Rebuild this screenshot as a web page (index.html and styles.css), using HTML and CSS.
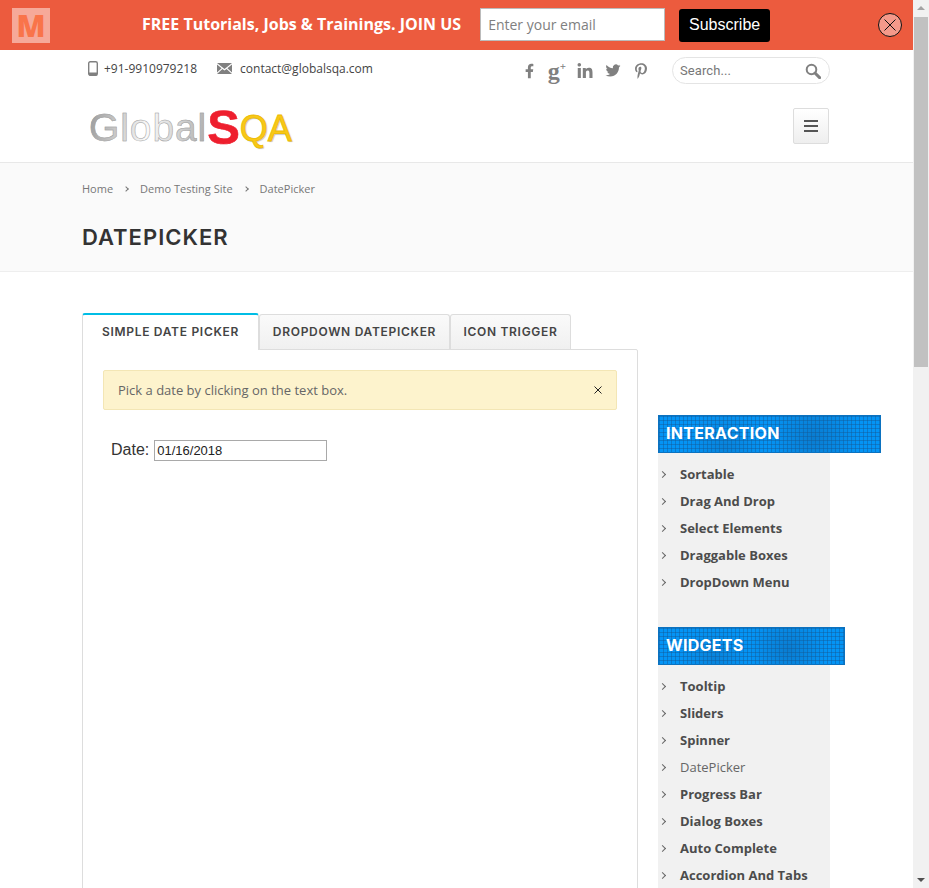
FILE: index.html
```html
<!DOCTYPE html>
<html lang="en">
<head>
  <meta charset="UTF-8">
  <meta name="viewport" content="width=device-width, initial-scale=1.0">
  <title>DatePicker</title>
  <link rel="stylesheet" href="styles.css">
</head>
<body>
  <div class="window">
    <div class="page">
      <div class="promo">
        <div class="promo-logo"><span>M</span></div>
        <div class="promo-text">FREE Tutorials, Jobs &amp; Trainings. JOIN US</div>
        <input class="promo-email" type="text" placeholder="Enter your email">
        <button class="promo-btn" type="button">Subscribe</button>
        <div class="promo-close">
          <svg width="24" height="24" viewBox="0 0 24 24">
            <circle cx="12" cy="12" r="11.5" fill="#f4998a" stroke="#111"/>
            <path d="M6.5 6.5l11 11M17.5 6.5l-11 11" stroke="#111" fill="none"/>
          </svg>
        </div>
      </div>

      <header class="header">
        <div class="topline">
          <div class="contact">
            <svg class="ico-phone" width="10" height="15" viewBox="0 0 10 15">
              <rect x="0.7" y="0.7" width="8.6" height="13.6" rx="1.5" fill="none" stroke="#808080" stroke-width="1.4"/>
              <rect x="1" y="11.5" width="8" height="3" fill="#808080"/>
            </svg>
            <span class="phone">+91-9910979218</span>
            <svg class="ico-mail" width="15" height="11" viewBox="0 0 15 11">
              <path d="M0 0h15L7.5 6z M0 1.6v8l4.6-4.3z M15 1.6v8l-4.6-4.3z M0 11h15L9.6 6 7.5 7.6 5.4 6z" fill="#808080"/>
            </svg>
            <span>contact@globalsqa.com</span>
          </div>
          <div class="social">
            <div class="social-item"><svg width="9" height="16" viewBox="0 0 320 512"><path d="M279.14 288l14.22-92.66h-88.91v-60.13c0-25.35 12.42-50.06 52.24-50.06h40.42V6.26S260.43 0 225.36 0c-73.22 0-121.08 44.38-121.08 124.72v70.62H22.89V288h81.39v224h100.17V288z"/></svg></div>
            <div class="social-item"><span class="gplus">g<sup>+</sup></span></div>
            <div class="social-item"><svg width="16" height="15" viewBox="0 0 448 448"><path d="M100.28 448H7.4V148.9h92.88zM53.79 108.1C24.09 108.1 0 83.5 0 53.8a53.79 53.79 0 0 1 107.58 0c0 29.7-24.1 54.3-53.79 54.3zM447.9 448h-92.68V302.4c0-34.7-.7-79.2-48.29-79.2-48.29 0-55.69 37.7-55.69 76.7V448h-92.78V148.9h89.08v40.8h1.3c12.4-23.5 42.69-48.3 87.88-48.3 94 0 111.28 61.9 111.28 142.3V448z"/></svg></div>
            <div class="social-item"><svg width="16" height="15" viewBox="0 0 24 24"><path d="M23.953 4.57a10 10 0 01-2.825.775 4.958 4.958 0 002.163-2.723c-.951.555-2.005.959-3.127 1.184a4.92 4.92 0 00-8.384 4.482C7.69 8.095 4.067 6.13 1.64 3.162a4.822 4.822 0 00-.666 2.475c0 1.71.87 3.213 2.188 4.096a4.904 4.904 0 01-2.228-.616v.06a4.923 4.923 0 003.946 4.827 4.996 4.996 0 01-2.212.085 4.936 4.936 0 004.604 3.417 9.867 9.867 0 01-6.102 2.105c-.39 0-.779-.023-1.17-.067a13.995 13.995 0 007.557 2.209c9.053 0 13.998-7.496 13.998-13.985 0-.21 0-.42-.015-.63A9.935 9.935 0 0024 4.59z"/></svg></div>
            <div class="social-item"><svg width="12" height="16" viewBox="0 0 384 512"><path d="M204 6.5C101.4 6.5 0 74.9 0 185.6 0 256 39.6 296 63.6 296c9.9 0 15.6-27.6 15.6-35.4 0-9.3-23.7-29.1-23.7-67.8 0-80.4 61.2-137.4 140.4-137.4 68.1 0 118.5 38.7 118.5 109.8 0 53.1-21.3 152.7-90.3 152.7-24.9 0-46.2-18-46.2-43.8 0-37.8 26.4-74.4 26.4-113.4 0-66.2-93.9-54.2-93.9 25.8 0 16.8 2.1 35.4 9.6 50.7-13.8 59.4-42 147.9-42 209.1 0 18.9 2.7 37.5 4.5 56.4 3.4 3.8 1.7 3.4 6.9 1.5 50.4-69 48.6-82.5 71.4-172.8 12.3 23.4 44.1 36 69.3 36 106.2 0 153.9-103.5 153.9-196.8C384 71.3 298.2 6.5 204 6.5z"/></svg></div>
          </div>
          <div class="search">
            <span>Search...</span>
            <svg width="16" height="16" viewBox="0 0 16 16">
              <circle cx="6.5" cy="6.5" r="4.8" fill="none" stroke="#808080" stroke-width="2"/>
              <path d="M10 10l4.6 4.6" stroke="#808080" stroke-width="3" stroke-linecap="round"/>
            </svg>
          </div>
        </div>
        <div class="logoline">
          <div class="logo"><span class="logo-global">Global</span><span class="logo-s">S</span><span class="logo-qa">QA</span></div>
          <div class="menu-btn"><i></i><i></i><i></i></div>
        </div>
      </header>

      <div class="titlebar">
        <div class="crumbs"><span>Home</span><b></b><span>Demo Testing Site</span><b></b><span>DatePicker</span></div>
        <h1>DATEPICKER</h1>
      </div>

      <div class="content">
        <div class="main">
          <div class="tabs">
            <div class="tab tab-active">SIMPLE DATE PICKER</div>
            <div class="tab tab-2">DROPDOWN DATEPICKER</div>
            <div class="tab tab-3">ICON TRIGGER</div>
          </div>
          <div class="panel">
            <div class="notice">
              <span>Pick a date by clicking on the text box.</span>
              <svg width="8" height="8" viewBox="0 0 8 8"><path d="M.5.5l7 7M7.5.5l-7 7" stroke="#222" fill="none"/></svg>
            </div>
            <div class="date-row">
              <label for="datepicker">Date:</label>
              <input id="datepicker" type="text" value="01/16/2018">
            </div>
          </div>
        </div>

        <aside class="side">
          <h3 class="side-title">INTERACTION</h3>
          <ul class="side-list">
            <li>Sortable</li>
            <li>Drag And Drop</li>
            <li>Select Elements</li>
            <li>Draggable Boxes</li>
            <li>DropDown Menu</li>
          </ul>
          <h3 class="side-title">WIDGETS</h3>
          <ul class="side-list">
            <li>Tooltip</li>
            <li>Sliders</li>
            <li>Spinner</li>
            <li class="current">DatePicker</li>
            <li>Progress Bar</li>
            <li>Dialog Boxes</li>
            <li>Auto Complete</li>
            <li>Accordion And Tabs</li>
          </ul>
        </aside>
      </div>
    </div>

    <div class="scrollbar">
      <div class="arrow-up"></div>
      <div class="thumb"></div>
      <div class="arrow-down"></div>
    </div>
  </div>
</body>
</html>
```

FILE: styles.css
```css
html, body {
  margin: 0;
  padding: 0;
  height: 100%;
  overflow: hidden;
}
body {
  font-family: "Open Sans", Arial, sans-serif;
  color: #444;
  background: #fff;
}
.window {
  display: flex;
  height: 888px;
}
.page {
  width: 913px;
  height: 888px;
  overflow: hidden;
}

/* promo bar */
.promo {
  display: flex;
  align-items: center;
  height: 50px;
  background: #ec5b3e;
}
.promo-logo {
  width: 38px;
  height: 35px;
  margin-left: 12px;
  background: #f6a999;
  text-align: center;
}
.promo-logo span {
  font: 800 30px/35px "Open Sans", sans-serif;
  color: #f9744a;
}
.promo-text {
  margin-left: 92px;
  margin-bottom: 2px;
  font-size: 16px;
  font-weight: 700;
  color: #fff;
  white-space: nowrap;
}
.promo-email {
  width: 185px;
  height: 33px;
  margin-left: 19px;
  margin-bottom: 2px;
  padding: 0 7px;
  box-sizing: border-box;
  border: 1px solid #bbb;
  font: 14px "Open Sans", sans-serif;
}
.promo-email::placeholder {
  color: #808080;
}
.promo-btn {
  width: 91px;
  height: 33px;
  margin-left: 14px;
  padding: 0;
  border: none;
  border-radius: 3px;
  background: #000;
  color: #fff;
  font: 16px "Liberation Sans", Arial, sans-serif;
}
.promo-close {
  display: flex;
  margin-left: auto;
  margin-right: 11px;
}

/* header */
.header {
  height: 112px;
  border-bottom: 1px solid #e8e8e8;
}
.topline {
  display: flex;
  align-items: center;
  height: 41px;
  padding-left: 88px;
}
.contact {
  display: flex;
  align-items: center;
  width: 427px;
  margin-top: -4px;
  font-size: 12px;
  color: #444;
}
.ico-phone {
  margin-right: 6px;
}
.ico-mail {
  margin-left: 20px;
  margin-right: 8px;
}
.social {
  display: flex;
  align-items: center;
  width: 157px;
  fill: #808080;
}
.social-item {
  display: flex;
  justify-content: center;
  width: 28px;
}
.gplus {
  font: bold 24px/16px "Liberation Serif", serif;
  color: #808080;
}
.gplus sup {
  font-size: 11px;
  line-height: 0;
}
.search {
  display: flex;
  align-items: center;
  justify-content: space-between;
  width: 158px;
  height: 27px;
  padding: 0 8px 0 7px;
  box-sizing: border-box;
  border: 1px solid #e4e4e4;
  border-radius: 14px;
  font: 13px Roboto, sans-serif;
  letter-spacing: .1px;
  color: #777;
}
.logoline {
  display: flex;
  align-items: center;
  justify-content: space-between;
  height: 71px;
  padding: 0 84px 0 89px;
}
.logo {
  margin-top: 10px;
  font-family: "Liberation Sans", Arial, sans-serif;
  line-height: 50px;
  white-space: nowrap;
}
.logo-global {
  font-size: 39px;
  letter-spacing: .9px;
  background: linear-gradient(100deg, #999, #fafafa 50%, #aaa);
  -webkit-background-clip: text;
  background-clip: text;
  color: transparent;
  -webkit-text-stroke: .5px #a0a0a0;
}
.logo-s {
  font-size: 49px;
  font-weight: 700;
  vertical-align: -3px;
  color: #ee1f2e;
  -webkit-text-stroke: .6px #ee1f2e;
}
.logo-qa {
  font-size: 36px;
  color: #f8c818;
  -webkit-text-stroke: .8px #eebb00;
  text-shadow: 1px 1px 1px rgba(0, 0, 0, .25);
}
.menu-btn {
  display: flex;
  flex-direction: column;
  justify-content: center;
  align-items: center;
  gap: 3px;
  width: 36px;
  height: 36px;
  margin-bottom: 2px;
  box-sizing: border-box;
  border: 1px solid #ddd;
  border-radius: 2px;
  background: linear-gradient(#fff, #eee);
}
.menu-btn i {
  display: block;
  width: 14px;
  height: 2px;
  background: #555;
}

/* title band */
.titlebar {
  height: 109px;
  padding: 18px 82px 0;
  box-sizing: border-box;
  background: #fafafa;
  border-bottom: 1px solid #eee;
}
.crumbs {
  display: flex;
  gap: 11px;
  font-size: 11px;
  line-height: 15px;
  color: #777;
}
.crumbs b {
  display: block;
  width: 3px;
  height: 3px;
  margin: 1px 1px 0 0;
  align-self: center;
  border-top: 1px solid #777;
  border-right: 1px solid #777;
  transform: rotate(45deg);
}
.titlebar h1 {
  margin: 26px 0 0;
  font: 600 22px/30px Inter, sans-serif;
  letter-spacing: 1px;
  color: #333;
}

/* main content */
.content {
  display: flex;
  gap: 20px;
  padding: 41px 0 0 82px;
}
.main {
  width: 556px;
  flex: none;
}
.tabs {
  display: flex;
  align-items: flex-end;
  height: 36px;
}
.tab {
  display: flex;
  align-items: center;
  justify-content: center;
  height: 35px;
  padding-bottom: 2px;
  box-sizing: border-box;
  border: 1px solid #ddd;
  border-bottom: none;
  border-radius: 3px 3px 0 0;
  background: linear-gradient(#fafafa, #f0f0f0);
  font: 600 12px Inter, sans-serif;
  letter-spacing: .7px;
  color: #444;
  white-space: nowrap;
}
.tab-active {
  width: 177px;
  height: 37px;
  border: 1px solid #ddd;
  border-top: 2px solid #00bde5;
  border-bottom: none;
  background: #fff;
  margin-bottom: -1px;
  position: relative;
}
.tab-2 {
  width: 191px;
}
.tab-3 {
  width: 121px;
}
.panel {
  height: 600px;
  padding: 20px;
  border: 1px solid #ddd;
  border-radius: 0 2px 0 0;
}
.notice {
  display: flex;
  align-items: center;
  justify-content: space-between;
  height: 40px;
  padding: 0 14px;
  box-sizing: border-box;
  border: 1px solid #f3e6b5;
  border-radius: 2px;
  background: #fdf3cd;
  font-size: 13px;
  color: #666;
}
.date-row {
  display: flex;
  align-items: center;
  gap: 5px;
  margin-top: 30px;
  padding-left: 8px;
  font: 16px "Liberation Sans", Arial, sans-serif;
  color: #333;
}
.date-row label {
  margin-bottom: 2px;
}
.date-row input {
  width: 173px;
  height: 21px;
  padding: 1px 2px;
  box-sizing: border-box;
  border: 1px solid #a9a9a9;
  font: 13px "Liberation Sans", Arial, sans-serif;
  color: #222;
}

/* sidebar */
.side {
  width: 172px;
  height: 600px;
  margin-top: 102px;
  flex: none;
  background: #f1f1f1;
}
.side-title {
  display: inline-block;
  height: 38px;
  margin: 0;
  padding: 0 100px 0 7px;
  box-sizing: border-box;
  border: 1px solid #0b72c0;
  background-color: #0494f5;
  background-image:
    linear-gradient(rgba(20, 90, 150, .45) 1px, transparent 1px),
    linear-gradient(90deg, rgba(20, 90, 150, .45) 1px, transparent 1px),
    radial-gradient(circle at 70% 60%, rgba(20, 80, 140, .35), transparent 30%),
    radial-gradient(circle at 30% 85%, rgba(20, 80, 140, .25), transparent 25%);
  background-size: 4px 4px, 4px 4px, 100% 100%, 100% 100%;
  font: 700 16px/34px Inter, sans-serif;
  letter-spacing: .3px;
  color: #fff;
  white-space: nowrap;
  position: relative;
}
.side-list {
  list-style: none;
  margin: 0;
  padding: 8px 0 31px;
}
.side-list li {
  height: 27px;
  padding-left: 22px;
  position: relative;
  font-size: 13px;
  font-weight: 700;
  line-height: 27px;
  color: #4c4c4c;
}
.side-list li::before {
  content: "";
  position: absolute;
  left: 2px;
  top: 11px;
  width: 4px;
  height: 4px;
  border-top: 1px solid #666;
  border-right: 1px solid #666;
  transform: rotate(45deg);
}
.side-list li.current {
  font-weight: 400;
  color: #666;
}

/* scrollbar */
.scrollbar {
  display: flex;
  flex-direction: column;
  align-items: center;
  justify-content: space-between;
  width: 16px;
  height: 888px;
  background: #f1f1f1;
  position: relative;
}
.arrow-up, .arrow-down {
  width: 0;
  height: 0;
  border-left: 4px solid transparent;
  border-right: 4px solid transparent;
}
.arrow-up {
  margin-top: 6px;
  border-bottom: 4px solid #a3a3a3;
}
.arrow-down {
  margin-bottom: 6px;
  border-top: 4px solid #505050;
}
.thumb {
  position: absolute;
  top: 17px;
  left: 1px;
  width: 14px;
  height: 350px;
  background: #c1c1c1;
}
```
